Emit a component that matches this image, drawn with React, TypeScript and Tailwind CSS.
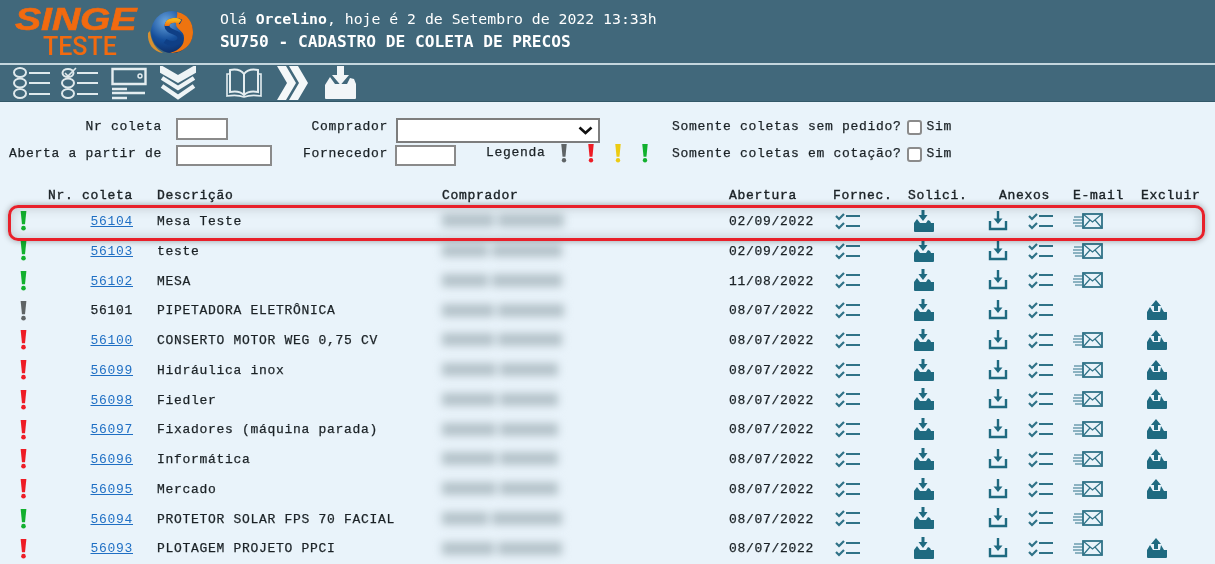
import React from "react";

const MONO = "font-['Liberation_Mono','Courier_New',monospace]";
const TEAL = "#1f6a80";
const LINE = "#2f7287";

type Coleta = {
  id: string;
  desc: string;
  date: string;
  color: string;
  link?: boolean;
  email?: boolean;
  excluir?: boolean;
  names: [number, number, number];
};

const GREEN = "#12b02e";
const RED = "#ee1c25";
const GRAY = "#5f6466";

const coletas: Coleta[] = [
  { id: "56104", desc: "Mesa Teste", date: "02/09/2022", color: GREEN, link: true, email: true, names: [52, 4, 66] },
  { id: "56103", desc: "teste", date: "02/09/2022", color: GREEN, link: true, email: true, names: [46, 4, 70] },
  { id: "56102", desc: "MESA", date: "11/08/2022", color: GREEN, link: true, email: true, names: [46, 4, 70] },
  { id: "56101", desc: "PIPETADORA ELETRÔNICA", date: "08/07/2022", color: GRAY, excluir: true, names: [52, 4, 66] },
  { id: "56100", desc: "CONSERTO MOTOR WEG 0,75 CV", date: "08/07/2022", color: RED, link: true, email: true, excluir: true, names: [52, 4, 64] },
  { id: "56099", desc: "Hidráulica inox", date: "08/07/2022", color: RED, link: true, email: true, excluir: true, names: [54, 4, 58] },
  { id: "56098", desc: "Fiedler", date: "08/07/2022", color: RED, link: true, email: true, excluir: true, names: [54, 4, 58] },
  { id: "56097", desc: "Fixadores (máquina parada)", date: "08/07/2022", color: RED, link: true, email: true, excluir: true, names: [54, 4, 58] },
  { id: "56096", desc: "Informática", date: "08/07/2022", color: RED, link: true, email: true, excluir: true, names: [54, 4, 58] },
  { id: "56095", desc: "Mercado", date: "08/07/2022", color: RED, link: true, email: true, excluir: true, names: [54, 4, 58] },
  { id: "56094", desc: "PROTETOR SOLAR FPS 70 FACIAL", date: "08/07/2022", color: GREEN, link: true, email: true, names: [46, 4, 70] },
  { id: "56093", desc: "PLOTAGEM PROJETO PPCI", date: "08/07/2022", color: RED, link: true, email: true, excluir: true, names: [52, 4, 64] },
];

const Mark = ({ color, className }: { color: string; className?: string }) => (
  <svg viewBox="0 0 8 22" className={className} fill={color}>
    <path d="M1 1h6L5.6 15H2.4z" />
    <circle cx="4" cy="19" r="2.4" />
  </svg>
);

const CheckList = () => (
  <svg width="26" height="20" viewBox="0 0 26 20" fill="none" stroke={LINE} strokeWidth="2.2">
    <path d="M1 5l3 3 5-5M1 14l3 3 5-5" />
    <path d="M11 5h14M11 15h14" />
  </svg>
);

const TrayDown = () => (
  <svg width="20" height="22" viewBox="0 0 20 22" fill={TEAL}>
    <path d="M7.5 0h3v5h3l-4.5 6-4.5-6h3z" />
    <path d="M3 9l3 4h6l2-3 2 1 1 2H20v8a1 1 0 0 1-1 1H1a1 1 0 0 1-1-1v-8z" />
  </svg>
);

const TrayUp = () => (
  <svg width="20" height="20" viewBox="0 0 20 20" fill={TEAL}>
    <path d="M9 0l5 6h-3v5H7V6H4z" />
    <path d="M3 7l3 5h7l1-5 3 5h3v7a1 1 0 0 1-1 1H1a1 1 0 0 1-1-1v-7z" />
  </svg>
);

const Download = () => (
  <svg width="20" height="20" viewBox="0 0 20 20" fill="none" stroke={TEAL} strokeWidth="2.4">
    <path d="M2 10v8h16v-8" />
    <path d="M10 0v10" />
    <path d="M5.5 7.5h9L10 13z" fill={TEAL} strokeWidth="0" />
  </svg>
);

const Mail = () => (
  <svg width="30" height="16" viewBox="0 0 30 16" fill="none" stroke={LINE}>
    <rect x="10" y="1" width="19" height="14" strokeWidth="1.8" />
    <path d="M10 1l9.5 8L29 1M10 15l7-8M29 15l-7-8" strokeWidth="1.2" />
    <path d="M1 4h9M0 7h10M0 10h10M2 13h7" strokeWidth="1.2" />
  </svg>
);

const ListIcon = ({ checked }: { checked?: boolean }) => (
  <svg width="38" height="32" viewBox="0 0 38 32" fill="none" stroke="#dfe9ec" strokeWidth="2">
    {checked ? (
      <>
        <ellipse cx="7" cy="6" rx="5.5" ry="4" />
        <path d="M4 6l3 3 8-8" strokeWidth="1.6" />
      </>
    ) : (
      <ellipse cx="7" cy="5.5" rx="6" ry="4.5" />
    )}
    <ellipse cx="7" cy="16" rx="6" ry="4.5" />
    <ellipse cx="7" cy="26.5" rx="6" ry="4.5" />
    <path d="M16 6h21M16 16h21M16 27h21" />
  </svg>
);

const CardIcon = () => (
  <svg width="36" height="33" viewBox="0 0 36 33" fill="none" stroke="#e4edf0">
    <path d="M1.5 2h33v15h-33z" strokeWidth="2.4" />
    <circle cx="29" cy="9" r="2" strokeWidth="1.4" />
    <path d="M1 22h15M1 26h33M1 31h15" strokeWidth="2.4" />
  </svg>
);

const TripleChevron = () => (
  <svg width="36" height="34" viewBox="0 0 36 34" fill="none" stroke="#eef4f6" strokeWidth="3.6">
    <path d="M1.5 1.5L18 11 34.5 1.5v4L18 15 1.5 5.5z" />
    <path d="M2 12l16 10 16-10" strokeWidth="4.4" />
    <path d="M2 20l16 11 16-11" strokeWidth="4.4" />
  </svg>
);

const Book = () => (
  <svg width="36" height="30" viewBox="0 0 36 30" fill="none" stroke="#e4edf0" strokeWidth="2">
    <path d="M18 6C15 2 9 1 4 2v22c5-1 11 0 14 3 3-3 9-4 14-3V2c-5-1-11 0-14 4z" />
    <path d="M18 6v21" />
    <path d="M4 6H1v22c6-1 12-1 17 1 5-2 11-2 17-1V6h-3" strokeWidth="1.6" />
  </svg>
);

const DoubleChevron = () => (
  <svg width="31" height="34" viewBox="0 0 31 34" fill="#f4f8f9">
    <path d="M0 0h9l10 17L9 34H0l10-17z" />
    <path d="M12 0h9l10 17-10 17h-9l10-17z" />
  </svg>
);

const FolderDown = () => (
  <svg width="34" height="34" viewBox="0 0 34 34" fill="#f2f6f8">
    <path d="M13 0h7v9h5l-8.5 10L8 9h5z" />
    <path d="M6 11l5 7h12l3-6 4 1 2 5v14a1 1 0 0 1-1 1H2a1 1 0 0 1-1-1V19z" />
  </svg>
);

const Logo = () => (
  <svg width="50" height="46" viewBox="0 0 50 46" className="-ml-[2px]">
    <defs>
      <radialGradient id="blue" cx="35%" cy="25%" r="80%">
        <stop offset="0%" stopColor="#6aa5de" />
        <stop offset="55%" stopColor="#154f9c" />
        <stop offset="100%" stopColor="#0c2c66" />
      </radialGradient>
      <linearGradient id="orange" x1="0" y1="0" x2="0" y2="1">
        <stop offset="0%" stopColor="#f7b11b" />
        <stop offset="100%" stopColor="#ee6a10" />
      </linearGradient>
    </defs>
    <path d="M2 24c-1 10 5 19 15 20-7-4-12-11-13-22z" fill="#d79030" />
    <circle cx="26" cy="23" r="21" fill="url(#blue)" />
    <path d="M31 3c11 2 16 11 16 20 0 12-9 21-23 21 10-3 14-8 14-15 0-8-8-8-8-14 0-5 2-9 1-12z" fill="#ee7410" />
    <path d="M35 13c-5-3-14-2-14 4 0 7 13 5 13 12 0 6-9 7-15 3" fill="none" stroke="#0f3f86" strokeWidth="5" />
    <path d="M34 13c-4-3-13-2-13 4" fill="none" stroke="url(#orange)" strokeWidth="5" />
  </svg>
);

const Redacted = ({ names }: { names: [number, number, number] }) => (
  <div className="flex h-[13px] blur-[4px]">
    <div className="h-full bg-[#b4c2c9]" style={{ width: names[0] }} />
    <div className="h-full" style={{ width: names[1] }} />
    <div className="h-full bg-[#b4c2c9]" style={{ width: names[2] }} />
  </div>
);

const rowGrid = "grid grid-cols-[47px_86px_309px_287px_104px_75px_75px_90px_67px_75px] items-center";
const bodyText = "text-[13px] tracking-[0.7px] [-webkit-text-stroke:0.25px]";
const headText = "pt-[2px] text-[13px] tracking-[0.7px] [-webkit-text-stroke:0.4px]";

export default function App() {
  return (
    <div className={`relative h-[564px] w-[1215px] overflow-hidden bg-[#e9f3fa] text-[#1b2226] blur-[0.5px] ${MONO}`}>
      {/* Topo */}
      <header className="flex h-[63px] items-center bg-[#41687b]">
        <div className="ml-[15px] flex w-[133px] flex-col gap-[2px]">
          <span className="h-[28px] origin-left scale-x-[1.26] font-['Liberation_Sans',sans-serif] text-[31px] leading-[28px] font-bold text-[#f26a0f] italic [-webkit-text-stroke:0.6px]">
            SINGE
          </span>
          <span className="ml-[28px] h-[22px] font-['Roboto',sans-serif] text-[25px] leading-[22px] font-medium text-[#f26a0f]">
            TESTE
          </span>
        </div>
        <Logo />
        <div className="mb-[2px] ml-[24px] flex flex-col gap-[3px] font-['DejaVu_Sans_Mono',monospace] text-white">
          <div className="text-[14.8px] leading-[20px]">
            Olá <span className="font-bold">Orcelino</span>, hoje é 2 de Setembro de 2022 13:33h
          </div>
          <div className="text-[16.2px] leading-[20px] font-bold">SU750 - CADASTRO DE COLETA DE PRECOS</div>
        </div>
      </header>
      <div className="h-[2px] bg-[#c4d6de]" />

      {/* Barra de ferramentas */}
      <nav className="flex h-[37px] items-center border-b border-[#335868] bg-[#41687b] pl-[13px]">
        <ListIcon />
        <div className="ml-[10px]">
          <ListIcon checked />
        </div>
        <div className="ml-[12px]">
          <CardIcon />
        </div>
        <div className="ml-[13px]">
          <TripleChevron />
        </div>
        <div className="ml-[30px]">
          <Book />
        </div>
        <div className="ml-[15px]">
          <DoubleChevron />
        </div>
        <div className="ml-[16px]">
          <FolderDown />
        </div>
      </nav>

      {/* Filtros */}
      <form className={`mt-[14px] grid auto-rows-[27px] grid-cols-[162px_134px_92px_284px_1fr] ${bodyText}`}>
        <label className="pt-[1px] text-right leading-[20px]">Nr coleta</label>
        <div className="pt-[2px] pl-[14px]">
          <input className="h-[22px] w-[52px] border-2 border-[#8a8a8a] bg-white" />
        </div>
        <label className="pt-[1px] text-right leading-[20px]">Comprador</label>
        <div className="pt-[2px] pl-[8px]">
          <div className="relative flex h-[25px] w-[204px] items-center justify-end border-2 border-[#7d7d7d] bg-white pr-[5px]">
            <svg width="15" height="9" viewBox="0 0 15 9" fill="none" stroke="#111" strokeWidth="2.6">
              <path d="M1.5 1.5l6 5.5 6-5.5" />
            </svg>
          </div>
        </div>
        <div className="flex h-[21px] items-center pt-[1px]">
          <span>Somente coletas sem pedido?</span>
          <span className="mr-[5px] ml-[5px] h-[15px] w-[15px] rounded-[3px] border-2 border-[#8b8b8b] bg-white" />
          <span>Sim</span>
        </div>

        <label className="pt-[1px] text-right leading-[20px]">Aberta a partir de</label>
        <div className="pt-[2px] pl-[14px]">
          <input className="h-[21px] w-[96px] border-2 border-[#8a8a8a] bg-white" />
        </div>
        <label className="pt-[1px] text-right leading-[20px]">Fornecedor</label>
        <div className="flex items-start pt-[2px] pl-[7px]">
          <input className="h-[21px] w-[61px] border-2 border-[#8a8a8a] bg-white" />
          <span className="ml-[30px] leading-[16px]">Legenda</span>
          <Mark color={GRAY} className="mt-[-2px] ml-[14px] h-[20px] w-[8px]" />
          <Mark color={RED} className="mt-[-2px] ml-[19px] h-[20px] w-[8px]" />
          <Mark color="#eccb12" className="mt-[-2px] ml-[19px] h-[20px] w-[8px]" />
          <Mark color={GREEN} className="mt-[-2px] ml-[19px] h-[20px] w-[8px]" />
        </div>
        <div className="flex h-[21px] items-center pt-[1px]">
          <span>Somente coletas em cotação?</span>
          <span className="mr-[5px] ml-[5px] h-[15px] w-[15px] rounded-[3px] border-2 border-[#8b8b8b] bg-white" />
          <span>Sim</span>
        </div>
      </form>

      {/* Lista */}
      <div className={`${rowGrid} mt-[14px] h-[22px]`}>
        <span />
        <span className={`text-right ${headText}`}>Nr. coleta</span>
        <span className={`pl-[24px] ${headText}`}>Descrição</span>
        <span className={headText}>Comprador</span>
        <span className={headText}>Abertura</span>
        <span className={headText}>Fornec.</span>
        <span className={headText}>Solici.</span>
        <span className={`pl-[16px] ${headText}`}>Anexos</span>
        <span className={headText}>E-mail</span>
        <span className={`pl-[1px] ${headText}`}>Excluir</span>
      </div>
      {coletas.map((c) => (
        <div key={c.id} className={`${rowGrid} h-[29.75px]`}>
          <Mark color={c.color} className="ml-[19px] h-[21px] w-[9px]" />
          {c.link ? (
            <a href="#" className="pt-[2px] text-right text-[13px] tracking-[0.7px] text-[#1f6fc4] underline">
              {c.id}
            </a>
          ) : (
            <span className={`pt-[2px] text-right ${bodyText}`}>{c.id}</span>
          )}
          <span className={`pt-[2px] pl-[24px] ${bodyText}`}>{c.desc}</span>
          <Redacted names={c.names} />
          <span className={`pt-[2px] ${bodyText}`}>{c.date}</span>
          <div className="pl-[2px]">
            <CheckList />
          </div>
          <div className="pl-[6px]">
            <TrayDown />
          </div>
          <div className="flex items-center gap-[20px] pl-[5px]">
            <Download />
            <CheckList />
          </div>
          <div>{c.email && <Mail />}</div>
          <div className="pl-[7px]">{c.excluir && <TrayUp />}</div>
        </div>
      ))}

      {/* Destaque vermelho da primeira linha */}
      <div className="pointer-events-none absolute top-[205px] left-[8px] h-[36px] w-[1197px] rounded-[10px] border-[3px] border-[#e8202a] shadow-[0_0_6px_rgba(0,0,0,0.35),inset_0_0_12px_rgba(0,0,0,0.18)]" />
    </div>
  );
}
